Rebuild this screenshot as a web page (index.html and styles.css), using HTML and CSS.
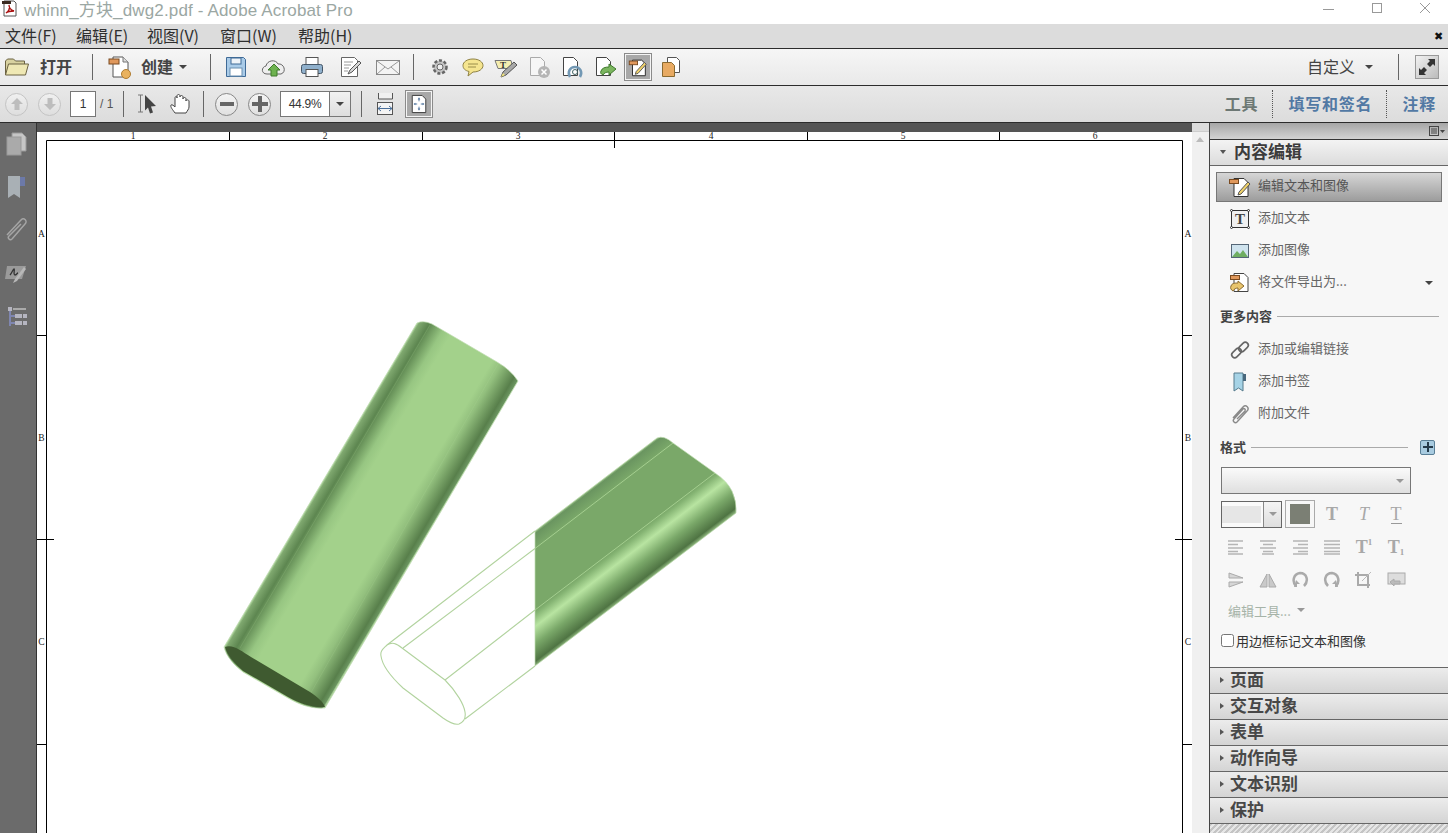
FILE: index.html
```html
<!DOCTYPE html>
<html lang="zh-CN">
<head>
  <meta charset="UTF-8">
  <title>whinn_方块_dwg2.pdf - Adobe Acrobat Pro</title>
  <link rel="stylesheet" href="styles.css">
</head>
<body>

  <!-- Title bar -->
  <div class="titlebar">
    <svg class="app-icon" width="18" height="18" viewBox="0 0 18 18"><path d="M3 1h10l2 2v13H3z" fill="#fff" stroke="#555"/><path d="M1 1h9v3H1z" fill="#3a2a20"/><path d="M5 13c3-2 4-5 3-8 0 3 2 5 5 6-3 0-6 0-8 2z" fill="none" stroke="#a11" stroke-width="1.3"/></svg>
    <span class="title-text">whinn_方块_dwg2.pdf - Adobe Acrobat Pro</span>
    <div class="window-btns">
      <svg width="12" height="12" viewBox="0 0 12 12"><path d="M0 7.500h11" stroke="#999" fill="none"/></svg>
      <svg width="12" height="12" viewBox="0 0 12 12"><rect x="1.500" y="1.500" width="9" height="9" stroke="#999" fill="none"/></svg>
      <svg width="12" height="12" viewBox="0 0 12 12"><path d="M1 1l10 10M11 1L1 11" stroke="#999" fill="none"/></svg>
    </div>
  </div>

  <!-- Menu -->
  <div class="menubar">
    <span class="menu-item m1">文件(F)</span>
    <span class="menu-item m2">编辑(E)</span>
    <span class="menu-item m3">视图(V)</span>
    <span class="menu-item m4">窗口(W)</span>
    <span class="menu-item">帮助(H)</span>
    <span class="menu-close">✖</span>
  </div>

  <!-- Main toolbar -->
  <div class="toolbar">
    <svg class="ico folder" width="26" height="24" viewBox="0 0 26 24"><path d="M1.500 20V6l2-2h6l2 2h9v3" fill="#d9d2a0" stroke="#6b6242"/><path d="M1.500 20l3-11h20l-3 11z" fill="#efe8b4" stroke="#6b6242"/></svg>
    <span class="tb-label open-label">打开</span>
    <span class="sep sep-open"></span>
    <svg class="ico" width="26" height="26" viewBox="0 0 26 26"><path d="M6 3h10l5 5v15H6z" fill="#fff" stroke="#555"/><path d="M16 3v5h5" fill="#ddd" stroke="#777"/><rect x="2" y="5" width="10" height="5" fill="#e0985c" stroke="#7a4a20"/><circle cx="19" cy="20" r="4.500" fill="#e9b25f" stroke="#b07c30"/></svg>
    <span class="tb-label create-label">创建</span>
    <span class="caret caret-create"></span>
    <span class="sep sep-create"></span>
    <div class="tb-group wide">
      <svg class="ico" width="26" height="26" viewBox="0 0 26 26"><path d="M3.500 3.500h17l2 2v17h-19z" fill="#a9cbe8" stroke="#3f6a96"/><rect x="8" y="4" width="10" height="6" fill="#eef3f8" stroke="#3f6a96"/><rect x="7" y="14" width="12" height="8" fill="#fff" stroke="#6b8fb0"/></svg>
      <svg class="ico" width="26" height="26" viewBox="0 0 26 26"><path d="M6 20c-6 0-6-7-1-8 1-6 10-7 12-2 6-1 9 8 3 10z" fill="#eee" stroke="#666"/><path d="M13 10l6 6h-3v6h-6v-6H7z" fill="#6db24f" stroke="#3f7a2c"/></svg>
      <svg class="ico" width="26" height="26" viewBox="0 0 26 26"><rect x="7" y="3.500" width="12" height="7" fill="#fff" stroke="#555"/><rect x="2.500" y="10.500" width="21" height="9" rx="2" fill="#8fb0cc" stroke="#456"/><rect x="7" y="15.500" width="12" height="7" fill="#fff" stroke="#555"/></svg>
      <svg class="ico" width="26" height="26" viewBox="0 0 26 26"><path d="M4.500 3.500h13l3 3v16h-16z" fill="#fff" stroke="#666"/><path d="M7 8h9M7 11h7M7 14h5M7 17h4" stroke="#999"/><path d="M11 20l2-4 9-9 2 2-9 9z" fill="#d8d8d8" stroke="#555"/></svg>
      <svg class="ico" width="26" height="26" viewBox="0 0 26 26"><rect x="1.500" y="6.500" width="23" height="14" fill="#f4f4f4" stroke="#888"/><path d="M2 7l11 8 11-8M2 20l8-7M24 20l-8-7" fill="none" stroke="#999"/></svg>
    </div>
    <span class="sep sep-mail"></span>
    <div class="tb-group">
      <svg class="ico" width="26" height="26" viewBox="0 0 26 26"><circle cx="13" cy="13" r="6.500" fill="#c4c4c4" stroke="#666" stroke-width="2.500" stroke-dasharray="3 1.800"/><circle cx="13" cy="13" r="3" fill="#eee" stroke="#666"/></svg>
      <svg class="ico" width="26" height="26" viewBox="0 0 26 26"><path d="M13 5c6 0 10 3 10 6.500S19 18 13 18l-5 4 1-4.500c-4-1-6-3-6-6C3 8 7 5 13 5z" fill="#f5e58f" stroke="#8f8242"/><path d="M8 10h10M8 13h8" stroke="#9a8e4a"/></svg>
      <svg class="ico" width="26" height="26" viewBox="0 0 26 26"><path d="M2 6.500h16l2 8H5z" fill="#f5eeb0" stroke="#777"/><text class="ico-t" x="7" y="14">T</text><path d="M8 23l2-5 11-10 3 3-11 10z" fill="#a8a8a8" stroke="#555"/><path d="M8 23l2-4 2 2z" fill="#efe27a"/></svg>
      <svg class="ico" width="26" height="26" viewBox="0 0 26 26"><path d="M4.500 3.500h10l4 4v14h-14z" fill="#f6f6f6" stroke="#aaa"/><circle cx="18" cy="18" r="6" fill="#b5b5b5"/><path d="M15.500 15.500l5 5M20.500 15.500l-5 5" stroke="#fff" stroke-width="1.500"/></svg>
      <svg class="ico" width="26" height="26" viewBox="0 0 26 26"><path d="M4.500 3.500h10l4 4v14h-14z" fill="#fff" stroke="#444"/><path d="M11 23c-3-5 0-10 5-10s8 5 5 10" fill="none" stroke="#7298b4" stroke-width="2.500"/><circle cx="16" cy="18" r="2.500" fill="none" stroke="#466" /></svg>
      <svg class="ico" width="26" height="26" viewBox="0 0 26 26"><path d="M4.500 3.500h10l4 4v14h-14z" fill="#fff" stroke="#444"/><path d="M9 17c1-3 4-4 8-4v-3l7 5-7 6v-3c-3 0-5 1-6 3-2-1-3-2-2-4z" fill="#7bb55f" stroke="#3f7a2c"/></svg>
      <div class="icon-btn active">
        <svg width="22" height="22" viewBox="0 0 24 24"><path d="M6 4.500h10l4 4v13H6z" fill="#fff" stroke="#222"/><rect x="2.500" y="5.500" width="9" height="4" fill="#e0985c" stroke="#7a4a20"/><path d="M9 20l1-3 9-10 2 2-9 10z" fill="#f0d26a" stroke="#555"/></svg>
      </div>
      <svg class="ico" width="26" height="26" viewBox="0 0 26 26"><path d="M9.500 3.500h9l3 3v12h-12z" fill="#fff" stroke="#555"/><path d="M4.500 8.500h9l3 3v11h-12z" fill="#e8aa62" stroke="#8a6a30"/></svg>
    </div>
    <div class="tb-right">
      <span class="custom-label">自定义</span>
      <span class="caret caret-custom"></span>
      <span class="sep sep-custom"></span>
      <div class="expand-btn">
        <svg width="22" height="22" viewBox="0 0 22 22"><path d="M12 3h7v7l-2-2-3 3-3-3 3-3zM10 19H3v-7l2 2 3-3 3 3-3 3z" fill="#333"/></svg>
      </div>
    </div>
  </div>

  <!-- Second toolbar -->
  <div class="toolbar toolbar-nav">
    <div class="round-btn"><svg width="14" height="14" viewBox="0 0 14 14"><path d="M7 1l6 6H9.500v6h-5V7H1z" fill="#bdbdbd"/></svg></div>
    <div class="round-btn"><svg width="14" height="14" viewBox="0 0 14 14"><path d="M7 13L1 7h3.500V1h5v6H13z" fill="#bdbdbd"/></svg></div>
    <div class="page-input">1</div>
    <span class="page-total">/ 1</span>
    <span class="sep sep-page"></span>
    <svg class="ico select-ico" width="22" height="22" viewBox="0 0 22 22"><path d="M1 2h5M1 19h5M3.500 2v17" stroke="#777" fill="none"/><path d="M8 2l11 11-5 .5 2 6-3 1-2-6-3 3z" fill="#444"/></svg>
    <svg class="ico hand-ico" width="22" height="22" viewBox="0 0 22 22"><path d="M6 20c-2-3-5-6-4-8 1-1 3 1 4 2V5c0-2 2-2 2 0V3c0-2 3-2 3 0v1c0-2 3-2 3 0v2c0-2 3-2 3 0v2c0-2 3-1 3 0v6c0 2-2 4-3 6z" fill="#fff" stroke="#444"/></svg>
    <span class="sep sep-hand"></span>
    <div class="round-btn zoom-btn"><span class="minus-bar"></span></div>
    <div class="round-btn zoom-btn"><svg width="16" height="16" viewBox="0 0 16 16"><path d="M6 0h4v6h6v4h-6v6H6v-6H0V6h6z" fill="#666"/></svg></div>
    <div class="zoom-combo">
      <span class="zoom-value">44.9%</span>
      <span class="zoom-arrow"><span class="caret"></span></span>
    </div>
    <span class="sep sep-zoom"></span>
    <svg class="ico fit-width" width="20" height="24" viewBox="0 0 20 24"><path d="M3.500 1v6h14V1" fill="#f0f0f0" stroke="#555"/><rect x="2.500" y="10.500" width="15" height="12" fill="#f4f4f4" stroke="#555"/><path d="M3 16.500h14M3 16.500l3-2.500M3 16.500l3 2.500M17 16.500l-3-2.500M17 16.500l-3 2.500" stroke="#4a6f9a" fill="none"/></svg>
    <div class="icon-btn fit-page">
      <svg width="18" height="20" viewBox="0 0 20 22"><path d="M2.500 1.500h11l4 4v15h-15z" fill="#fff" stroke="#333"/><path d="M10 4v4M10 14v4M5 11h3M12 11h3" stroke="#4a6f9a"/><path d="M8.500 6L10 4l1.500 2zM8.500 16l1.500 2 1.500-2zM6 9.500L4 11l2 1.500zM14 9.500l2 1.500-2 1.500z" fill="#4a6f9a"/></svg>
    </div>
    <div class="pane-tabs">
      <span class="pane-tab">工具</span>
      <span class="pane-dots"></span>
      <span class="pane-tab blue">填写和签名</span>
      <span class="pane-dots"></span>
      <span class="pane-tab blue">注释</span>
    </div>
  </div>

  <div class="main">
    <!-- Navigation rail -->
    <div class="rail">
      <svg width="24" height="26" viewBox="0 0 24 26"><path d="M8 2h10l4 4v14H8z" fill="#c6c6c6" stroke="#9a9a9a"/><rect x="3" y="6" width="14" height="18" fill="#aaa" stroke="#999"/></svg>
      <svg width="24" height="26" viewBox="0 0 24 26"><path d="M4 2h12v22l-6-4-6 4z" fill="#a9b0b5"/><path d="M16 3h5v9h-5z" fill="#6c79a8"/></svg>
      <svg width="24" height="26" viewBox="0 0 24 26"><path d="M3 18L17 3c3-3 7 1 4 4L8 22c-2 2-5-1-3-3L17 7" fill="none" stroke="#a5a5a5" stroke-width="1.500"/></svg>
      <svg width="24" height="26" viewBox="0 0 24 26"><path d="M3 6h19l-4 13H1z" fill="#9a9a9a"/><path d="M6 15c2-2 3-6 4-6s-1 6 1 6 2-2 3-2" fill="none" stroke="#333" stroke-width="1.300"/><path d="M9 23l2-4 9-12 2 2-9 12z" fill="#b8b8b8"/></svg>
      <svg width="24" height="26" viewBox="0 0 24 26"><rect x="4" y="4" width="4" height="4" fill="#b5b5c0"/><path d="M9 6h13" stroke="#aaa" stroke-width="2"/><path d="M6 8v15M6 13h5M6 20h5" stroke="#7f86b0" stroke-width="2" fill="none"/><rect x="11" y="11" width="7" height="4" fill="#b5b5c0"/><rect x="19" y="11" width="4" height="4" fill="#b5b5c0"/><rect x="11" y="18" width="7" height="4" fill="#b5b5c0"/><rect x="19" y="18" width="4" height="4" fill="#b5b5c0"/></svg>
    </div>

    <!-- Document -->
    <div class="doc">
      <div class="doc-top"></div>
      <svg class="drawing" width="1155" height="702" viewBox="37 131 1155 702">
        <defs>
          <linearGradient id="tubeA" gradientUnits="userSpaceOnUse" x1="418" y1="322" x2="518" y2="381.500">
            <stop offset="0" stop-color="#a8cf97"/>
            <stop offset="0.015" stop-color="#7fa86f"/>
            <stop offset="0.09" stop-color="#5d8650"/>
            <stop offset="0.22" stop-color="#97c682"/>
            <stop offset="0.3" stop-color="#a3d18b"/>
            <stop offset="0.72" stop-color="#a3d18b"/>
            <stop offset="0.8" stop-color="#93c07e"/>
            <stop offset="0.95" stop-color="#587f4b"/>
            <stop offset="0.99" stop-color="#6b9560"/>
            <stop offset="1" stop-color="#a8cf97"/>
          </linearGradient>
          <linearGradient id="tubeB" gradientUnits="userSpaceOnUse" x1="535" y1="531" x2="600" y2="616">
            <stop offset="0" stop-color="#9cc48a"/>
            <stop offset="0.02" stop-color="#6a9560"/>
            <stop offset="0.13" stop-color="#7aa869"/>
            <stop offset="0.59" stop-color="#7aa869"/>
            <stop offset="0.62" stop-color="#86b574"/>
            <stop offset="0.71" stop-color="#b8e4a1"/>
            <stop offset="0.84" stop-color="#7aa869"/>
            <stop offset="0.97" stop-color="#4f7443"/>
            <stop offset="1" stop-color="#86ae76"/>
          </linearGradient>
        </defs>

        <!-- page frame and ruler -->
        <path class="frame" d="M46.500 840V140.500H1182.500V840"/>
        <path class="frame" d="M229.500 131v9M422.500 131v9M614.500 131v17M807.500 131v9M999.500 131v9M37 335.500h9M37 539.500h17M37 744.500h9M1183 335.500h9M1175 539.500h17M1183 744.500h9"/>
        <g class="ruler-text">
          <text x="133" y="139">1</text><text x="325" y="139">2</text><text x="518" y="139">3</text>
          <text x="711" y="139">4</text><text x="903" y="139">5</text><text x="1095" y="139">6</text>
          <text x="41.500" y="237">A</text><text x="41.500" y="441">B</text><text x="41.500" y="645">C</text>
          <text x="1188" y="237">A</text><text x="1188" y="441">B</text><text x="1188" y="645">C</text>
        </g>

        <!-- first tube -->
        <path class="tube" fill="url(#tubeA)" d="M224 647L417 323Q423 320 432 324L497 362Q511 370 518 381L325 708C312 709 300 705 288 698L243 672C234 665 226 656 224 647Z"/>
        <path class="tube-line" d="M430 325L240 648M498 364L309 696"/>
        <path fill="#3f5a30" d="M225 647C233 644 241 651 251 657L310 692C318 697 324 703 325 707C314 708 300 704 288 697L243 671C235 664 227 655 225 647Z"/>

        <!-- second tube, shaded part -->
        <path class="tube" fill="url(#tubeB)" d="M535 531L657 438Q664 435 673 443L715 473Q727 481 732 491Q737 502 736 513L535 666Z"/>
        <path class="tube-light" d="M535 548.500L673 443M535 610L715 473"/>

        <!-- second tube, wireframe part -->
        <path class="wire" d="M535 531L387 645C383 649 380 651 381 656C382 664 388 674 403 688L443 718C450 723 455 725 459 724C464 722 466 718 465 712C464 705 457 692 445 680L402 648C396 643 392 642 387 645M403 648L535 548.500M445 680L535 610M465 719L535 666"/>
      </svg>
      <div class="scrollbar">
        <div class="scroll-corner"></div>
        <span class="scroll-up"></span>
      </div>
    </div>

    <!-- Right pane -->
    <div class="pane">
      <div class="pane-top">
        <svg width="16" height="11" viewBox="0 0 16 11"><rect x=".5" y=".5" width="9" height="9" fill="none" stroke="#444"/><path d="M2 3h6M2 5h6M2 7h6" stroke="#444"/><path d="M11 4h5l-2.500 3z" fill="#444"/></svg>
      </div>
      <div class="pane-head"><span class="tri-down"></span>内容编辑</div>

      <div class="pane-body">
        <div class="tool-item selected">
          <svg width="24" height="22" viewBox="0 0 24 22"><path d="M6 2.500h10l4 4v14H6z" fill="#fff" stroke="#333"/><rect x="1.500" y="3.500" width="9" height="4" fill="#e0985c" stroke="#7a4a20"/><path d="M10 19l1-3 9-10 2 2-9 10z" fill="#f0d26a" stroke="#555"/></svg>
          <span>编辑文本和图像</span>
        </div>
        <div class="tool-item">
          <svg width="24" height="22" viewBox="0 0 24 22"><rect x="3.500" y="2.500" width="17" height="17" fill="#f0f0f0" stroke="#333"/><text class="ico-big" x="12" y="16">T</text><g fill="#fff" stroke="#333"><circle cx="3.500" cy="2.500" r="1"/><circle cx="20.500" cy="2.500" r="1"/><circle cx="3.500" cy="19.500" r="1"/><circle cx="20.500" cy="19.500" r="1"/></g></svg>
          <span>添加文本</span>
        </div>
        <div class="tool-item">
          <svg width="24" height="22" viewBox="0 0 24 22"><rect x="3.500" y="4.500" width="17" height="13" fill="#cfe3ee" stroke="#567"/><path d="M4 17l5-6 3 3 3-4 5 7z" fill="#6fae62"/></svg>
          <span>添加图像</span>
        </div>
        <div class="tool-item">
          <svg width="24" height="22" viewBox="0 0 24 22"><path d="M6 1.500h10l4 4v14H6z" fill="#fff" stroke="#444"/><rect x="2.500" y="3.500" width="9" height="4" fill="#e0985c" stroke="#7a4a20"/><path d="M3 14c1-3 4-3 7-3V9l6 5-6 5v-3c-2 0-4 1-5 3-2-1-3-3-2-5z" fill="#e8c46c" stroke="#8a6a30"/></svg>
          <span>将文件导出为...</span>
          <span class="caret caret-end"></span>
        </div>

        <div class="group-head"><b>更多内容</b><span class="rule"></span></div>
        <div class="tool-item more">
          <svg width="24" height="22" viewBox="0 0 24 22"><g fill="none" stroke="#666" stroke-width="1.600"><rect x="3" y="11" width="11" height="6" rx="3" transform="rotate(-45 8.500 14)"/><rect x="10" y="5" width="11" height="6" rx="3" transform="rotate(-45 15.500 8)"/></g></svg>
          <span>添加或编辑链接</span>
        </div>
        <div class="tool-item">
          <svg width="24" height="22" viewBox="0 0 24 22"><path d="M6 2h9v18l-4.500-3L6 20z" fill="#a6d3e6" stroke="#557a8c"/><path d="M15 3h3v7h-3z" fill="#48677c"/></svg>
          <span>添加书签</span>
        </div>
        <div class="tool-item">
          <svg width="24" height="22" viewBox="0 0 24 22"><path d="M5 15L15 4c3-3 7 1 4 4L9 19c-2 2-5-1-3-3l9-10c1-1 3 0 2 2l-8 8" fill="none" stroke="#8a8a8a" stroke-width="1.400"/></svg>
          <span>附加文件</span>
        </div>

        <div class="group-head"><b>格式</b><span class="rule short"></span>
          <span class="plus-btn"><svg width="10" height="10" viewBox="0 0 10 10"><path d="M4 0h2v4h4v2H6v4H4V6H0V4h4z" fill="#243a4a"/></svg></span>
        </div>

        <div class="font-select"><span class="caret light"></span></div>

        <div class="format-row">
          <div class="size-combo">
            <span class="size-value"><i></i></span>
            <span class="size-arrow"><span class="caret light"></span></span>
          </div>
          <div class="color-btn"><i></i></div>
          <div class="fmt-cell"><span class="t-bold">T</span></div>
          <div class="fmt-cell"><span class="t-italic">T</span></div>
          <div class="fmt-cell"><span class="t-under">T</span></div>
        </div>

        <div class="format-grid">
          <div class="fmt-cell"><svg width="18" height="16" viewBox="0 0 18 16"><path d="M1 2h15M1 5.500h10M1 9h15M1 12.500h10M1 15h15" stroke="#b5b5b5" stroke-width="1.500"/></svg></div>
          <div class="fmt-cell"><svg width="18" height="16" viewBox="0 0 18 16"><path d="M1 2h16M4 5.500h10M1 9h16M4 12.500h10M3 15h12" stroke="#b5b5b5" stroke-width="1.500"/></svg></div>
          <div class="fmt-cell"><svg width="18" height="16" viewBox="0 0 18 16"><path d="M2 2h15M7 5.500h10M2 9h15M7 12.500h10M2 15h15" stroke="#b5b5b5" stroke-width="1.500"/></svg></div>
          <div class="fmt-cell"><svg width="18" height="16" viewBox="0 0 18 16"><path d="M1 2h16M1 5.500h16M1 9h16M1 12.500h16M1 15h16" stroke="#b5b5b5" stroke-width="1.500"/></svg></div>
          <div class="fmt-cell"><span class="t-bold">T</span><sup class="t-mark">1</sup></div>
          <div class="fmt-cell"><span class="t-bold">T</span><sub class="t-mark">1</sub></div>

          <div class="fmt-cell"><svg width="18" height="18" viewBox="0 0 18 18"><path d="M2 2l14 5H2zM2 11h14L2 16z" fill="#d6d6d6" stroke="#aaa"/></svg></div>
          <div class="fmt-cell"><svg width="18" height="18" viewBox="0 0 18 18"><path d="M8 3v13H1zM10 3v13h7z" fill="#c9c9c9" stroke="#aaa"/></svg></div>
          <div class="fmt-cell"><svg width="18" height="18" viewBox="0 0 18 18"><path d="M5 15C1 11 2 3 9 2c7 0 9 8 4 13" fill="none" stroke="#aaa" stroke-width="2.500"/><path d="M5 9l4 4H6v3H3z" fill="#aaa"/></svg></div>
          <div class="fmt-cell"><svg width="18" height="18" viewBox="0 0 18 18"><path d="M13 15c4-4 3-12-4-13C2 2 0 10 5 15" fill="none" stroke="#aaa" stroke-width="2.500"/><path d="M13 9l-4 4h3v3h3z" fill="#aaa"/></svg></div>
          <div class="fmt-cell"><svg width="20" height="18" viewBox="0 0 20 18"><path d="M4 1v13h12M1 4h13v13" fill="none" stroke="#aaa" stroke-width="2"/><path d="M8 10l9-9" stroke="#bbb"/></svg></div>
          <div class="fmt-cell"><svg width="20" height="18" viewBox="0 0 20 18"><rect x="2" y="2" width="17" height="11" fill="#ddd" stroke="#aaa"/><path d="M4 11l4-3v2h6v3H8v2z" fill="#bbb" stroke="#aaa"/></svg></div>
        </div>

        <div class="edit-tools">编辑工具... <span class="caret light"></span></div>

        <label class="mark-check"><input type="checkbox">用边框标记文本和图像</label>
      </div>

      <div class="pane-panel"><span class="tri-right"></span>页面</div>
      <div class="pane-panel"><span class="tri-right"></span>交互对象</div>
      <div class="pane-panel"><span class="tri-right"></span>表单</div>
      <div class="pane-panel"><span class="tri-right"></span>动作向导</div>
      <div class="pane-panel"><span class="tri-right"></span>文本识别</div>
      <div class="pane-panel"><span class="tri-right"></span>保护</div>
      <div class="pane-hatch"></div>
    </div>
  </div>

</body>
</html>
```

FILE: styles.css
```css
* {
  margin: 0;
  padding: 0;
  box-sizing: border-box;
}

html, body {
  width: 1448px;
  height: 833px;
  overflow: hidden;
}

body {
  font-family: "Noto Sans CJK SC", "Liberation Sans", sans-serif;
  background-color: #fff;
  color: #333;
}

svg {
  display: block;
  flex: none;
}

/* Title bar */
.titlebar {
  height: 24px;
  display: flex;
  align-items: center;
  background-color: #fff;
  padding-left: 1px;
}

.title-text {
  margin-left: 5px;
  font-size: 17px;
  color: #9ba7a3;
  white-space: nowrap;
  font-family: "Liberation Sans", "Noto Sans CJK SC", sans-serif;
  padding-bottom: 8px;
  letter-spacing: 0.15px;
}

.app-icon {
  margin-top: -6px;
}

.window-btns {
  margin-left: auto;
  display: flex;
  gap: 36px;
  padding-right: 17px;
  margin-top: -8px;
}

/* Menu */
.menubar {
  height: 24px;
  display: flex;
  align-items: center;
  background-color: #dcdcdc;
  padding-left: 5px;
  padding-bottom: 2px;
  font-size: 16px;
  color: #2f2f2f;
}

.menu-item {
  white-space: nowrap;
  width: 71px;
}

.m3 { width: 73px; }
.m4 { width: 78px; }

.menu-close {
  margin-left: auto;
  padding-right: 5px;
  font-size: 11px;
  color: #111;
}

/* Toolbars */
.toolbar {
  height: 37px;
  display: flex;
  align-items: center;
  border-top: 1px solid #2c2c2c;
  background: linear-gradient(#f6f6f6, #e9e9e9);
  padding-left: 4px;
}

.toolbar-nav {
  background: linear-gradient(#e8e8e8, #dcdcdc);
  padding-left: 5px;
}

.tb-label {
  font-size: 16px;
  font-weight: 700;
  color: #444;
  white-space: nowrap;
  padding-bottom: 3px;
}

.open-label { margin-left: 10px; }
.create-label { margin-left: 8px; }

.sep {
  width: 1px;
  height: 26px;
  background-color: #666;
  flex: none;
}

.sep-open { margin: 0 14px 0 20px; }
.sep-create { margin: 0 12px 0 23px; }
.sep-mail { margin: 0 13px 0 12px; }
.sep-custom { margin-left: 25px; }

.caret {
  display: inline-block;
  width: 0;
  height: 0;
  border-left: 4px solid transparent;
  border-right: 4px solid transparent;
  border-top: 4px solid #444;
  flex: none;
}

.caret.light {
  border-top-color: #999;
}

.caret-create { margin-left: 6px; }

.tb-group {
  display: flex;
  align-items: center;
  gap: 7px;
}

.tb-group.wide {
  gap: 12px;
}

.icon-btn {
  width: 26px;
  height: 26px;
  display: flex;
  align-items: center;
  justify-content: center;
  background-color: #a8a8a8;
  border: 1px solid #f4f4f4;
  outline: 1px solid #8a8a8a;
}

.tb-right {
  margin-left: auto;
  display: flex;
  align-items: center;
  padding-right: 9px;
}

.custom-label {
  font-size: 16px;
  color: #444;
  padding-bottom: 3px;
}

.caret-custom { margin-left: 10px; }

.expand-btn {
  width: 24px;
  height: 24px;
  margin-left: 16px;
  display: flex;
  align-items: center;
  justify-content: center;
  background: linear-gradient(135deg, #f2f2f2, #bbb);
  border: 1px solid #999;
}

/* Page navigation */
.round-btn {
  width: 23px;
  height: 23px;
  border-radius: 50%;
  border: 1px solid #c4c4c4;
  background: linear-gradient(#f0f0f0, #dedede);
  display: flex;
  align-items: center;
  justify-content: center;
  margin-right: 10px;
  flex: none;
}

.page-input {
  width: 26px;
  height: 26px;
  background-color: #fff;
  border: 1px solid #777;
  font: 12px "Liberation Sans", sans-serif;
  display: flex;
  align-items: center;
  justify-content: center;
  margin-left: -1px;
}

.page-total {
  font: 12px "Liberation Sans", sans-serif;
  color: #555;
  margin-left: 4px;
  width: 15px;
  white-space: nowrap;
}

.sep-page { margin-left: 8px; }
.select-ico { margin-left: 13px; }
.hand-ico { margin-left: 10px; }
.sep-hand { margin: 0 11px 0 12px; }

.zoom-btn {
  border-color: #888;
  background: linear-gradient(#f4f4f4, #e0e0e0);
}

.minus-bar {
  width: 14px;
  height: 4px;
  background-color: #666;
}

.zoom-combo {
  width: 71px;
  height: 26px;
  display: flex;
  border: 1px solid #777;
  background-color: #fff;
  margin-left: -1px;
  flex: none;
}

.zoom-value {
  width: 48px;
  font: 12px/24px "Liberation Sans", sans-serif;
  text-align: center;
  letter-spacing: -0.3px;
}

.zoom-arrow {
  flex: 1;
  border-left: 1px solid #777;
  background: linear-gradient(#f2f2f2, #dedede);
  display: flex;
  align-items: center;
  justify-content: center;
}

.sep-zoom { margin-left: 10px; }
.fit-width { margin-left: 13px; }

.fit-page {
  margin-left: 11px;
}

.pane-tabs {
  margin-left: auto;
  display: flex;
  align-items: center;
  padding-right: 12px;
}

.pane-tab {
  font-size: 16px;
  font-weight: 700;
  color: #6d7874;
  letter-spacing: 0.8px;
  white-space: nowrap;
  padding-bottom: 3px;
}

.pane-tab.blue {
  color: #5279a4;
}

.pane-dots {
  width: 0;
  height: 28px;
  border-left: 1px dotted #555;
  margin: 0 15px 0 14px;
}

/* Work area */
.main {
  height: 711px;
  display: flex;
  border-top: 1px solid #2c2c2c;
}

.rail {
  width: 37px;
  flex: none;
  background-color: #6b6b6b;
  border-right: 1px solid #333;
  display: flex;
  flex-direction: column;
  align-items: center;
  gap: 17px;
  padding-top: 8px;
  padding-right: 5px;
}

.doc {
  width: 1172px;
  flex: none;
  position: relative;
  background-color: #fff;
  display: flex;
  overflow: hidden;
}

.doc-top {
  position: absolute;
  left: 0;
  top: 0;
  width: 1155px;
  height: 9px;
  background-color: #555;
}

.drawing {
  margin-top: 8px;
}

.frame {
  fill: none;
  stroke: #000;
  stroke-width: 1;
}

.ruler-text text {
  font: 9.500px "Liberation Serif", serif;
  fill: #222;
  text-anchor: middle;
}

.tube {
  stroke: #c0dcb2;
  stroke-width: 0.7;
}

.tube-line {
  fill: none;
  stroke: #b4dc9d;
  stroke-width: 0.5;
  opacity: 0.35;
}

.tube-light {
  fill: none;
  stroke: #a9d394;
  stroke-width: 0.9;
}

.wire {
  fill: none;
  stroke: #b2d39f;
  stroke-width: 1.1;
}

.scrollbar {
  flex: 1;
  background-color: #f0f0f0;
  position: relative;
}

.scroll-corner {
  height: 9px;
  background-color: #dcdcdc;
  border-bottom: 1px solid #ccc;
}

.scroll-up {
  position: absolute;
  left: 4px;
  top: 14px;
  width: 0;
  height: 0;
  border-left: 4px solid transparent;
  border-right: 4px solid transparent;
  border-bottom: 5px solid #bbb;
}

/* Right pane */
.pane {
  flex: 1;
  min-width: 0;
  display: flex;
  flex-direction: column;
  background-color: #f7f7f7;
  border-left: 1px solid #444;
}

.pane-top {
  height: 17px;
  flex: none;
  background: linear-gradient(#a6a6a6, #d2d2d2);
  border-bottom: 1px solid #333;
  display: flex;
  align-items: center;
  justify-content: flex-end;
  padding-right: 3px;
}

.pane-head {
  height: 26px;
  flex: none;
  display: flex;
  align-items: center;
  font-size: 17px;
  font-weight: 700;
  color: #3c3c3c;
  background: linear-gradient(#f3f3f3, #dcdcdc);
  border-bottom: 1px solid #666;
  padding: 0 0 4px 10px;
}

.tri-down {
  width: 0;
  height: 0;
  border-left: 3px solid transparent;
  border-right: 3px solid transparent;
  border-top: 4px solid #555;
  margin: 3px 8px 0 0;
}

.tri-right {
  width: 0;
  height: 0;
  border-top: 3px solid transparent;
  border-bottom: 3px solid transparent;
  border-left: 4px solid #555;
  margin: 3px 6px 0 0;
}

.pane-body {
  flex: 1;
  min-height: 0;
  padding-top: 5px;
}

.tool-item {
  height: 32px;
  display: flex;
  align-items: center;
  padding-left: 18px;
  font-size: 13px;
  color: #666;
  white-space: nowrap;
}

.tool-item span:first-of-type {
  margin-left: 6px;
  padding-bottom: 6px;
}

.tool-item.selected {
  height: 30px;
  margin: 1px 6px 1px 6px;
  padding-left: 11px;
  background: linear-gradient(#d6d6d6, #9c9c9c);
  border: 1px solid #777;
  color: #555;
}

.tool-item.more {
  margin-top: 7px;
}

.caret-end {
  margin-left: auto;
  margin-right: 15px;
}

.group-head {
  height: 20px;
  margin-top: 8px;
  display: flex;
  align-items: center;
  padding-left: 10px;
  padding-bottom: 2px;
  font-size: 13px;
  color: #444;
}

.group-head b {
  padding-bottom: 2px;
}

.rule {
  flex: 1;
  height: 1px;
  background-color: #aaa;
  margin: 0 9px 0 5px;
}

.rule.short {
  margin-right: 12px;
}

.plus-btn {
  width: 15px;
  height: 15px;
  border: 1px solid #5a7f96;
  border-radius: 2px;
  background-color: #a8cbe0;
  display: flex;
  align-items: center;
  justify-content: center;
  margin-right: 13px;
}

.font-select {
  width: 190px;
  height: 27px;
  margin: 9px 0 0 11px;
  border: 1px solid #777;
  background: linear-gradient(#fafafa, #dfdfdf);
  display: flex;
  align-items: center;
  justify-content: flex-end;
  padding-right: 6px;
}

.format-row {
  height: 28px;
  margin-top: 6px;
  padding-left: 11px;
  display: flex;
  align-items: center;
}

.size-combo {
  width: 61px;
  height: 27px;
  display: flex;
  border: 1px solid #666;
  background-color: #fafafa;
}

.size-value {
  width: 41px;
  display: flex;
  align-items: center;
}

.size-value i {
  display: block;
  width: 39px;
  height: 17px;
  background-color: #e6e6e6;
}

.size-arrow {
  flex: 1;
  border-left: 1px solid #888;
  background: linear-gradient(#f4f4f4, #dedede);
  display: flex;
  align-items: center;
  justify-content: center;
}

.color-btn {
  width: 30px;
  height: 28px;
  margin: 0 1px 0 3px;
  border: 1px solid #aaa;
  display: flex;
  align-items: center;
  justify-content: center;
}

.color-btn i {
  display: block;
  width: 20px;
  height: 20px;
  background-color: #7b7f74;
}

.fmt-cell {
  width: 32px;
  height: 33px;
  display: flex;
  align-items: center;
  justify-content: center;
}

.format-row .fmt-cell {
  height: 28px;
}

.t-bold, .t-italic, .t-under {
  font: 700 18px/1 "Liberation Serif", serif;
  color: #a8a8a8;
}

.t-italic {
  font-style: italic;
  font-weight: 400;
}

.t-under {
  font-weight: 400;
  border-bottom: 1px solid #999;
}

.t-mark {
  font: 700 9px/1 "Liberation Serif", serif;
  color: #a8a8a8;
  align-self: flex-start;
  margin-top: 8px;
}

sub.t-mark {
  align-self: flex-end;
  margin: 0 0 6px;
}

.format-grid {
  margin: 2px 0 0 10px;
  display: grid;
  grid-template-columns: repeat(6, 32px);
}

.edit-tools {
  height: 20px;
  margin: 5px 0 0 18px;
  padding-bottom: 2px;
  font-size: 13px;
  color: #a6b3a8;
  display: flex;
  align-items: center;
  gap: 6px;
}

.mark-check {
  height: 20px;
  margin: 10px 0 0 11px;
  padding-bottom: 2px;
  display: flex;
  align-items: center;
  font-size: 13px;
  color: #333;
}

.mark-check input {
  width: 13px;
  height: 13px;
  margin: 0 2px 0 0;
}

.pane-panel {
  height: 26px;
  flex: none;
  display: flex;
  align-items: center;
  padding: 0 0 4px 10px;
  font-size: 17px;
  font-weight: 700;
  color: #484848;
  border-top: 1px solid #666;
  background: linear-gradient(#ececec, #d4d4d4);
}

.pane-hatch {
  height: 10px;
  flex: none;
  border-top: 1px solid #666;
  background: repeating-linear-gradient(135deg, #c4c4c4 0 2px, #e6e6e6 2px 4px);
}

.ico-t {
  font: 700 9px "Liberation Serif", serif;
  fill: #333;
}

.ico-big {
  font: 700 15px "Liberation Serif", serif;
  fill: #444;
  text-anchor: middle;
}
```
